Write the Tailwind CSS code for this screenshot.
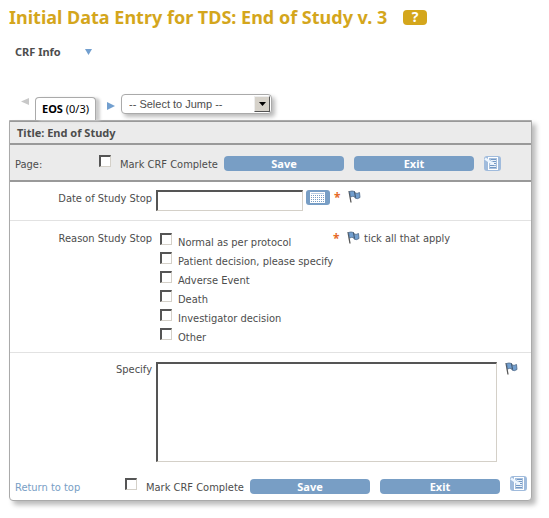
<!DOCTYPE html>
<html lang="en">
<head>
<meta charset="utf-8">
<meta name="viewport" content="width=device-width, initial-scale=1">
<title>Initial Data Entry for TDS: End of Study</title>
<script src="https://cdn.jsdelivr.net/npm/@tailwindcss/browser@4"></script>
</head>
<body class="bg-white pt-1 pr-[17px] pb-4 pl-[9px] font-['DejaVu_Sans_Condensed','DejaVu_Sans',sans-serif] text-[11px] leading-4 text-[#4d4d4d]">
<svg class="hidden" aria-hidden="true">
  <symbol id="flag" viewBox="0 0 13 13">
    <path d="M1 1L3 12.500" stroke="#555" stroke-width="1.300" fill="none"/>
    <path d="M1.500 1.500Q4 .5 6.500 1.500L7 3Q9 4 11.500 2.500L12 7.500Q9.500 9.500 7 8L6.500 6.500Q4.500 6 2.500 7Z" fill="#729fcf" stroke="#4a6685" stroke-width=".8"/>
    <path d="M6.500 1.500L7.500 7.500" stroke="#3d5269" stroke-width="1"/>
  </symbol>
  <symbol id="note" viewBox="0 0 17 15">
    <rect width="17" height="15" rx="3" fill="#a0bbdc"/>
    <rect x="4.500" y="1.500" width="9" height="12" fill="#a9c1de" stroke="#fff"/>
    <path d="M7 4.500h5M8 6.500h4M6 8.500h6M6 10.500h6" stroke="#e9f1fa"/>
    <path d="M7 3.500h5M9 5.500h3M10 7.500h2M6 9.500h6M6 11.500h6" stroke="#7398c4"/>
    <path d="M1 2.500L9 8" stroke="#edf6ff" stroke-width="2.500"/>
    <path d="M9 7l2 2.500" stroke="#fff"/>
  </symbol>
</svg>

<header id="top" class="flex items-center gap-4">
  <h1 class="font-['Noto_Sans',sans-serif] text-[18px] leading-[26px] font-bold whitespace-nowrap text-[#d4a61c]">Initial Data Entry for TDS: End of Study v. 3</h1>
  <button type="button" aria-label="Help" class="flex h-[15px] w-6 items-center justify-center rounded bg-[#d4a61c] font-['Noto_Sans',sans-serif] text-[14px] leading-none font-bold text-white">?</button>
</header>

<button type="button" class="mt-[14px] ml-[6px] flex items-center gap-6 font-['Noto_Sans',sans-serif] font-bold">
  CRF Info
  <svg class="h-[6px] w-[7px]" viewBox="0 0 7 6"><path d="M0 0h7L3.500 6z" fill="#729fcf"/></svg>
</button>

<nav class="mt-[34px] flex h-[26px] items-end pl-3" aria-label="Form sections">
  <button type="button" aria-label="Previous" class="mb-[15px] mr-[6px]"><svg class="h-[7px] w-2" viewBox="0 0 8 7"><path d="M8 0v7L0 3.500z" fill="#c8c8c8"/></svg></button>
  <a href="#crf" class="flex h-[23px] w-[61px] items-center justify-center rounded-t border border-b-0 border-[#aaa] bg-white font-['Noto_Sans',sans-serif] whitespace-nowrap text-black shadow-[4px_1px_3px_#ccc]"><b>EOS</b>&nbsp;(0/3)</a>
  <button type="button" aria-label="Next" class="mb-[10px] ml-[11px] mr-[6px]"><svg class="h-2 w-2" viewBox="0 0 8 8"><path d="M0 0v8l8-4z" fill="#729fcf"/></svg></button>
  <div class="relative mb-[6px] flex">
    <select aria-label="Select to Jump" class="h-5 w-[151px] appearance-none rounded border border-[#aaa] bg-white pl-[7px] font-['Liberation_Sans',sans-serif] text-[11px] text-[#4d4d4d] shadow-[3px_3px_4px_#bbb]"><option>-- Select to Jump --</option></select>
    <span class="pointer-events-none absolute top-[2px] right-[2px] flex size-4 items-center justify-center border border-t-[#eee] border-r-[#555] border-b-[#555] border-l-[#eee] bg-[#d6d2ca]"><svg class="h-1 w-[7px]" viewBox="0 0 7 4"><path d="M0 0h7L3.500 4z" fill="#000"/></svg></span>
  </div>
</nav>

<form id="crf" class="rounded-b border border-[#aaa] bg-white shadow-[4px_4px_5px_#bbb]">
  <h2 class="h-6 border-t border-b-2 border-[#999] bg-[#ebebeb] pt-[3px] pl-[7px] font-['Noto_Sans',sans-serif] font-bold">Title: End of Study</h2>
  <div class="flex h-[37px] items-center border-b-2 border-[#999] bg-[#ebebeb] pt-[2px] pl-[5px]">
    <span class="w-[84px] pt-[2px]">Page:</span>
    <input id="done-top" type="checkbox" class="mb-[6px] size-3 shrink-0 appearance-none border border-t-2 border-l-2 border-t-[#555] border-r-[#d4d0c8] border-b-[#d4d0c8] border-l-[#555] bg-white checked:bg-[#729fcf]">
    <label for="done-top" class="ml-[9px] w-[104px] pt-[2px] whitespace-nowrap">Mark CRF Complete</label>
    <button type="submit" class="mr-[10px] h-[15px] w-[120px] rounded bg-[#789ec5] font-['Noto_Sans',sans-serif] leading-[15px] font-bold text-white">Save</button>
    <button type="button" class="mr-[10px] h-[15px] w-[120px] rounded bg-[#789ec5] font-['Noto_Sans',sans-serif] leading-[15px] font-bold text-white">Exit</button>
    <button type="button" aria-label="Notes"><svg class="h-[15px] w-[17px]"><use href="#note"/></svg></button>
  </div>

  <div class="flex h-[39px] items-start border-b border-[#e2e2e2] pt-[8px]">
    <label for="stop-date" class="mr-1 w-[142px] pt-px text-right whitespace-nowrap">Date of Study Stop</label>
    <input id="stop-date" type="text" class="h-[21px] w-[147px] border-t-2 border-r border-b border-l-2 border-t-[#555] border-r-[#d4d0c8] border-b-[#d4d0c8] border-l-[#555] bg-white px-1">
    <button type="button" aria-label="Choose date" class="ml-[3px]"><svg class="h-[15px] w-6" viewBox="0 0 24 15"><rect width="24" height="15" rx="3" fill="#789ec5"/><path d="M4 2h15v11H4z" fill="#fff"/><path d="M5 3.500h13" stroke="#b5cbe3"/><path d="M5 5.500h13M5 7.500h13M5 9.500h13M5 11.500h13" stroke="#789ec5" stroke-dasharray="1 1"/></svg></button>
    <span class="ml-1 w-[14px] font-['Noto_Sans',sans-serif] text-[12px] font-bold text-[#e66a28]">*</span>
    <button type="button" aria-label="Discrepancy note for date"><svg class="size-[13px]"><use href="#flag"/></svg></button>
  </div>

  <fieldset class="flex h-[132px] items-start border-b border-[#e2e2e2] pt-[10px]">
    <div id="reason" class="w-[142px] text-right whitespace-nowrap">Reason Study Stop</div>
    <div class="ml-2 w-[173px]" role="group" aria-labelledby="reason">
      <div class="flex h-[19px] gap-[6px]"><input id="r1" type="checkbox" class="mt-[2px] size-3 shrink-0 appearance-none border border-t-2 border-l-2 border-t-[#555] border-r-[#d4d0c8] border-b-[#d4d0c8] border-l-[#555] bg-white checked:bg-[#729fcf]"><label for="r1" class="pt-1 whitespace-nowrap">Normal as per protocol</label></div>
      <div class="flex h-[19px] gap-[6px]"><input id="r2" type="checkbox" class="mt-[2px] size-3 shrink-0 appearance-none border border-t-2 border-l-2 border-t-[#555] border-r-[#d4d0c8] border-b-[#d4d0c8] border-l-[#555] bg-white checked:bg-[#729fcf]"><label for="r2" class="pt-1 whitespace-nowrap">Patient decision, please specify</label></div>
      <div class="flex h-[19px] gap-[6px]"><input id="r3" type="checkbox" class="mt-[2px] size-3 shrink-0 appearance-none border border-t-2 border-l-2 border-t-[#555] border-r-[#d4d0c8] border-b-[#d4d0c8] border-l-[#555] bg-white checked:bg-[#729fcf]"><label for="r3" class="pt-1 whitespace-nowrap">Adverse Event</label></div>
      <div class="flex h-[19px] gap-[6px]"><input id="r4" type="checkbox" class="mt-[2px] size-3 shrink-0 appearance-none border border-t-2 border-l-2 border-t-[#555] border-r-[#d4d0c8] border-b-[#d4d0c8] border-l-[#555] bg-white checked:bg-[#729fcf]"><label for="r4" class="pt-1 whitespace-nowrap">Death</label></div>
      <div class="flex h-[19px] gap-[6px]"><input id="r5" type="checkbox" class="mt-[2px] size-3 shrink-0 appearance-none border border-t-2 border-l-2 border-t-[#555] border-r-[#d4d0c8] border-b-[#d4d0c8] border-l-[#555] bg-white checked:bg-[#729fcf]"><label for="r5" class="pt-1 whitespace-nowrap">Investigator decision</label></div>
      <div class="flex h-[19px] gap-[6px]"><input id="r6" type="checkbox" class="mt-[2px] size-3 shrink-0 appearance-none border border-t-2 border-l-2 border-t-[#555] border-r-[#d4d0c8] border-b-[#d4d0c8] border-l-[#555] bg-white checked:bg-[#729fcf]"><label for="r6" class="pt-1 whitespace-nowrap">Other</label></div>
    </div>
    <span class="w-[14px] font-['Noto_Sans',sans-serif] text-[12px] font-bold text-[#e66a28]">*</span>
    <button type="button" aria-label="Discrepancy note for reason"><svg class="size-[13px]"><use href="#flag"/></svg></button>
    <span class="ml-1 whitespace-nowrap">tick all that apply</span>
  </fieldset>

  <div class="flex items-start pt-[9px]">
    <label for="specify" class="mr-1 w-[142px] text-right">Specify</label>
    <textarea id="specify" class="h-[100px] w-[341px] resize-none border-t-2 border-r border-b border-l-2 border-t-[#555] border-r-[#d4d0c8] border-b-[#d4d0c8] border-l-[#555] bg-white p-1"></textarea>
    <button type="button" aria-label="Discrepancy note for specify" class="ml-2"><svg class="size-[13px]"><use href="#flag"/></svg></button>
  </div>

  <div class="flex h-[38px] items-center pt-3 pb-[1px] pl-[5px]">
    <a href="#top" class="w-[110px] pt-[2px] whitespace-nowrap text-[#789ec5]">Return to top</a>
    <input id="done-bottom" type="checkbox" class="mb-[6px] size-3 shrink-0 appearance-none border border-t-2 border-l-2 border-t-[#555] border-r-[#d4d0c8] border-b-[#d4d0c8] border-l-[#555] bg-white checked:bg-[#729fcf]">
    <label for="done-bottom" class="ml-[9px] w-[104px] pt-[2px] whitespace-nowrap">Mark CRF Complete</label>
    <button type="submit" class="mr-[10px] h-[15px] w-[120px] rounded bg-[#789ec5] font-['Noto_Sans',sans-serif] leading-[15px] font-bold text-white">Save</button>
    <button type="button" class="mr-[10px] h-[15px] w-[120px] rounded bg-[#789ec5] font-['Noto_Sans',sans-serif] leading-[15px] font-bold text-white">Exit</button>
    <button type="button" aria-label="Notes" class="mb-[6px]"><svg class="h-[15px] w-[17px]"><use href="#note"/></svg></button>
  </div>
</form>
</body>
</html>
